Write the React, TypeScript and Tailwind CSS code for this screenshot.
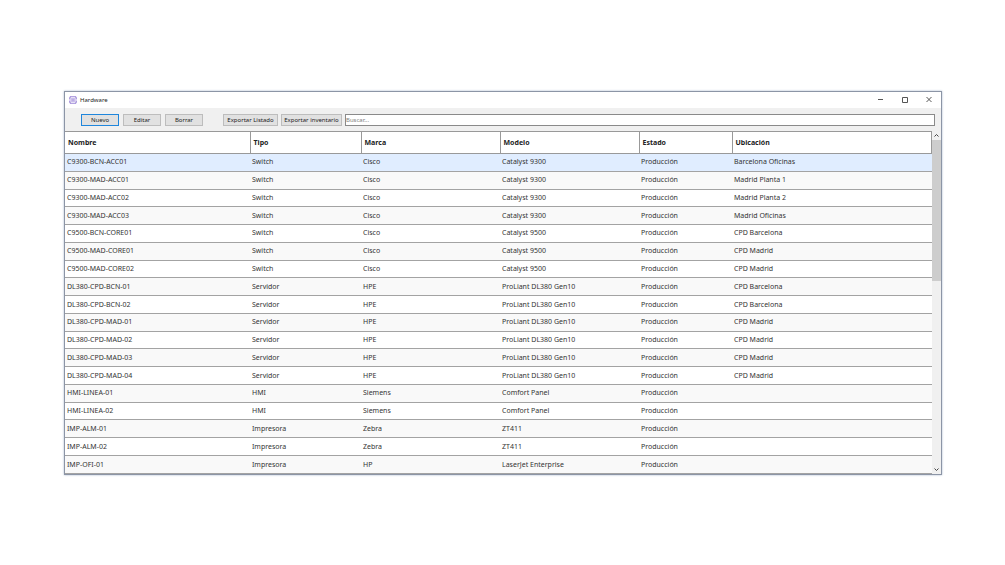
import { JSX, useState } from "react";

type Device = {
    name: string;
    type: string;
    brand: string;
    model: string;
    status: string;
    location: string;
};

const device = (name: string, type: string, brand: string, model: string, location = ""): Device => ({
    name, type, brand, model, status: "Producción", location,
});

const DEVICES: Device[] = [
    device("C9300-BCN-ACC01", "Switch", "Cisco", "Catalyst 9300", "Barcelona Oficinas"),
    device("C9300-MAD-ACC01", "Switch", "Cisco", "Catalyst 9300", "Madrid Planta 1"),
    device("C9300-MAD-ACC02", "Switch", "Cisco", "Catalyst 9300", "Madrid Planta 2"),
    device("C9300-MAD-ACC03", "Switch", "Cisco", "Catalyst 9300", "Madrid Oficinas"),
    device("C9500-BCN-CORE01", "Switch", "Cisco", "Catalyst 9500", "CPD Barcelona"),
    device("C9500-MAD-CORE01", "Switch", "Cisco", "Catalyst 9500", "CPD Madrid"),
    device("C9500-MAD-CORE02", "Switch", "Cisco", "Catalyst 9500", "CPD Madrid"),
    device("DL380-CPD-BCN-01", "Servidor", "HPE", "ProLiant DL380 Gen10", "CPD Barcelona"),
    device("DL380-CPD-BCN-02", "Servidor", "HPE", "ProLiant DL380 Gen10", "CPD Barcelona"),
    device("DL380-CPD-MAD-01", "Servidor", "HPE", "ProLiant DL380 Gen10", "CPD Madrid"),
    device("DL380-CPD-MAD-02", "Servidor", "HPE", "ProLiant DL380 Gen10", "CPD Madrid"),
    device("DL380-CPD-MAD-03", "Servidor", "HPE", "ProLiant DL380 Gen10", "CPD Madrid"),
    device("DL380-CPD-MAD-04", "Servidor", "HPE", "ProLiant DL380 Gen10", "CPD Madrid"),
    device("HMI-LINEA-01", "HMI", "Siemens", "Comfort Panel"),
    device("HMI-LINEA-02", "HMI", "Siemens", "Comfort Panel"),
    device("IMP-ALM-01", "Impresora", "Zebra", "ZT411"),
    device("IMP-ALM-02", "Impresora", "Zebra", "ZT411"),
    device("IMP-OFI-01", "Impresora", "HP", "LaserJet Enterprise"),
];

const COLUMNS = [
    { label: "Nombre", width: "w-[185px]" },
    { label: "Tipo", width: "w-[111px]" },
    { label: "Marca", width: "w-[139px]" },
    { label: "Modelo", width: "w-[139px]" },
    { label: "Estado", width: "w-[93px]" },
    { label: "Ubicación", width: "" },
];

export default function App(): JSX.Element {
    const [selected, setSelected] = useState("C9300-BCN-ACC01");
    const [query, setQuery] = useState("");

    const rows = DEVICES.filter((d) => Object.values(d).join(" ").toLowerCase().includes(query.toLowerCase()));

    return (
        <main className="flex min-h-screen items-center bg-white pt-px pr-[63px] pl-16 font-['Noto_Sans','Open_Sans',sans-serif] text-[#333]">
            <section className="w-full min-w-0 border border-[#8c95a6] bg-[#f0f0f0] shadow-[0_0_2px_#a9b8cc]">
                <TitleBar />
                <div className="flex h-[23px] items-center pr-1.5 pl-4">
                    <div className="flex gap-1">
                        <ToolButton label="Nuevo" width="w-[38px]" primary />
                        <ToolButton label="Editar" width="w-[38px]" />
                        <ToolButton label="Borrar" width="w-[38px]" />
                    </div>
                    <div className="ml-5 flex min-w-0 flex-1 gap-[3px]">
                        <ToolButton label="Exportar Listado" width="w-[55px]" />
                        <ToolButton label="Exportar inventario" width="w-[61px]" />
                        <input
                            type="text"
                            aria-label="Buscar"
                            placeholder="Buscar..."
                            value={query}
                            onChange={(e) => setQuery(e.target.value)}
                            className="h-3 min-w-0 flex-1 border border-[#8a8a8a] bg-white px-0 text-[6px] leading-none outline-none placeholder:text-[#808080]"
                        />
                    </div>
                </div>
                <div className="flex">
                    <div className="min-w-0 flex-1 bg-white">
                        <table className="h-[343px] w-full table-fixed border-collapse text-left text-[7px] leading-[10px] whitespace-nowrap">
                            <thead>
                                <tr className="h-[22px]">
                                    {COLUMNS.map((c) => (
                                        <th key={c.label} className={`${c.width} border-y border-r border-[#999] px-[3px] py-0 font-bold text-[#222]`}>
                                            {c.label}
                                        </th>
                                    ))}
                                </tr>
                            </thead>
                            <tbody>
                                {rows.map((d) => (
                                    <tr
                                        key={d.name}
                                        onClick={() => setSelected(d.name)}
                                        className={`border-b border-[#a3a3a3] ${d.name === selected ? "bg-[#e0edff]" : "odd:bg-white even:bg-[#f9f9f9]"}`}
                                    >
                                        <td className="px-0.5 py-0">{d.name}</td>
                                        <td className="px-0.5 py-0">{d.type}</td>
                                        <td className="px-0.5 py-0">{d.brand}</td>
                                        <td className="px-0.5 py-0">{d.model}</td>
                                        <td className="px-0.5 py-0">{d.status}</td>
                                        <td className="px-0.5 py-0">{d.location}</td>
                                    </tr>
                                ))}
                            </tbody>
                        </table>
                    </div>
                    <ScrollBar />
                </div>
            </section>
        </main>
    );
}

function TitleBar() {
    return (
        <header className="flex h-4 items-center justify-between bg-white pr-2 pl-1">
            <div className="flex items-center gap-[3px]">
                <svg className="size-2" viewBox="0 0 16 16" fill="none" stroke="#7a5cc9" strokeWidth="1.5">
                    <path d="M2 4.500V1.500H14V4.500M2 11.500V14.500H14V11.500M2 6.500V9.500M14 6.500V9.500" />
                    <circle cx="8" cy="8" r="2.500" />
                    <path d="M0 4.500H3M0 11.500H3M13 4.500H16M13 11.500H16" />
                    <path d="M4.500 4.500L5.500 5.500M11.500 4.500L10.500 5.500M4.500 11.500L5.500 10.500M11.500 11.500L10.500 10.500" />
                </svg>
                <h1 className="text-[6px] leading-[10px] text-[#222]">Hardware</h1>
            </div>
            <div className="flex gap-4">
                <button aria-label="Minimizar">
                    <svg className="size-2" viewBox="0 0 8 8" stroke="#555">
                        <path d="M1 3.500H6" />
                    </svg>
                </button>
                <button aria-label="Maximizar">
                    <svg className="size-2" viewBox="0 0 8 8" fill="none" stroke="#555">
                        <path d="M1.500 1.500H6.500V6.500H1.500Z" />
                    </svg>
                </button>
                <button aria-label="Cerrar">
                    <svg className="size-2" viewBox="0 0 8 8" stroke="#444" strokeWidth="0.900">
                        <path d="M1.500 1L6.500 6M6.500 1L1.500 6" />
                    </svg>
                </button>
            </div>
        </header>
    );
}

function ToolButton({ label, width, primary = false }: { label: string; width: string; primary?: boolean }) {
    return (
        <button
            className={`${width} flex h-3 shrink-0 items-center justify-center border bg-[#e1e1e1] text-[6px] leading-none whitespace-nowrap text-[#222] ${primary ? "border-[#1f86dc]" : "border-[#bdbdbd]"}`}
        >
            {label}
        </button>
    );
}

function ScrollBar() {
    return (
        <div className="flex w-[9px] flex-col items-stretch bg-[#f0f0f0]">
            <button aria-label="Subir" className="flex h-[9px] items-center justify-center">
                <svg className="size-[5px]" viewBox="0 0 5 5" fill="none" stroke="#444">
                    <path d="M0.500 3.500L2.500 1.500L4.500 3.500" />
                </svg>
            </button>
            <div className="flex flex-1 flex-col">
                <div className="h-[141px] bg-[#cdcdcd]" />
            </div>
            <button aria-label="Bajar" className="flex h-[9px] items-center justify-center">
                <svg className="size-[5px]" viewBox="0 0 5 5" fill="none" stroke="#444">
                    <path d="M0.500 1.500L2.500 3.500L4.500 1.500" />
                </svg>
            </button>
        </div>
    );
}
